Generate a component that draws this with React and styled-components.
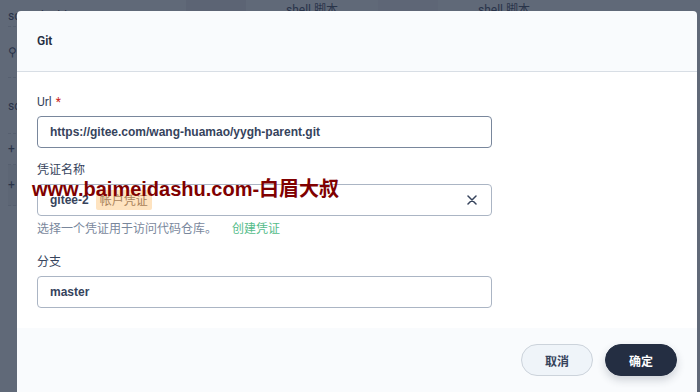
import React from 'react'
import styled, { createGlobalStyle } from 'styled-components'

const GlobalStyle = createGlobalStyle`
  body {
    margin: 0;
    overflow: hidden;
    font-family: Roboto, 'Liberation Sans', 'Noto Sans CJK SC', sans-serif;
  }
`

const Page = styled.div`
  position: relative;
  width: 700px;
  height: 392px;
  overflow: hidden;
  background: #eff4f9;
  display: flex;
`

const SideList = styled.div`
  width: 150px;
  padding: 6px 8px;
  font-size: 12px;
  color: #36435c;
  display: flex;
  flex-direction: column;
`

const SideRow = styled.div`
  height: ${({ h }) => h || 32}px;
  display: flex;
  align-items: center;
  gap: 6px;
  border-bottom: 1px dashed #ccd3db;
  background: ${({ dark }) => (dark ? '#e3e9ef' : 'transparent')};
`

const TopStrip = styled.div`
  flex: 1;
  display: flex;
  gap: 40px;
  padding: 0 20px;
  font-size: 12px;
  color: #36435c;
  height: 24px;
`

const Block = styled.div`
  width: ${({ w }) => w}px;
  height: 24px;
  background: ${({ bg }) => bg};
`

const Backdrop = styled.div`
  position: absolute;
  inset: 0;
  background: rgba(35, 45, 65, 0.7);
`

const Modal = styled.div`
  position: absolute;
  left: 17px;
  top: 11px;
  width: 680px;
  height: 400px;
  background: #f9fbfd;
  border-radius: 4px;
  display: flex;
  flex-direction: column;
  overflow: hidden;
`

const Header = styled.div`
  height: 60px;
  flex-shrink: 0;
  display: flex;
  align-items: center;
  padding: 0 20px;
  border-bottom: 1px solid #d8dee5;
  font-size: 12px;
  font-weight: 600;
  color: #242e42;
`

const Body = styled.div`
  position: relative;
  background: #fff;
  padding: 20px 205px 20px 20px;
  display: flex;
  flex-direction: column;
`

const Field = styled.div`
  display: flex;
  flex-direction: column;
  margin-bottom: ${({ mb }) => mb || 0}px;
`

const Label = styled.div`
  font-size: 12px;
  line-height: 20px;
  color: #36435c;
  margin-bottom: 4px;
  font-family: Roboto, 'Noto Sans CJK SC', sans-serif;

  span {
    color: #ca2621;
    margin-left: 4px;
  }
`

const Input = styled.div`
  height: 32px;
  box-sizing: border-box;
  border: 1px solid ${({ focus }) => (focus ? '#79879c' : '#abb5c4')};
  border-radius: 4px;
  padding: 0 12px;
  display: flex;
  align-items: center;
  gap: 7px;
  font-size: 12px;
  font-weight: 600;
  color: #36435c;
  font-family: 'Liberation Sans', 'Noto Sans CJK SC', sans-serif;
`

const Tag = styled.span`
  height: 20px;
  line-height: 20px;
  padding: 0 4px;
  border-radius: 2px;
  background: #fee3c0;
  color: #a9825a;
  font-weight: 400;
  font-family: 'Noto Sans CJK SC', sans-serif;
`

const Clear = styled.span`
  margin-left: auto;
  display: flex;
  margin-right: 2px;
`

const Hint = styled.div`
  margin-top: 2px;
  font-size: 12px;
  line-height: 20px;
  color: #79879c;
  font-family: 'Noto Sans CJK SC', sans-serif;

  a {
    color: #55bc8a;
    margin-left: 15px;
    text-decoration: none;
  }
`

const Watermark = styled.div`
  position: absolute;
  left: 15px;
  top: 101px;
  font-family: 'Liberation Sans', 'Noto Sans CJK SC', sans-serif;
  font-weight: 700;
  font-size: 20px;
  color: #800000;
  white-space: nowrap;
  pointer-events: none;
`

const Footer = styled.div`
  flex: 1;
  display: flex;
  justify-content: flex-end;
  align-items: flex-start;
  gap: 12px;
  padding: 16px 20px;
`

const Button = styled.button`
  width: 72px;
  height: 32px;
  border-radius: 16px;
  font-size: 12px;
  font-weight: 600;
  font-family: 'Noto Sans CJK SC', sans-serif;
  cursor: pointer;
  border: 1px solid ${({ primary }) => (primary ? '#242e42' : '#ccd3db')};
  background: ${({ primary }) => (primary ? '#242e42' : '#eff4f9')};
  color: ${({ primary }) => (primary ? '#fff' : '#36435c')};
  box-shadow: ${({ primary }) => (primary ? '0 4px 8px rgba(36,46,66,0.2)' : 'none')};
`

const App = () => {
  return (
    <Page>
      <GlobalStyle />
      <SideList>
        <SideRow h={20}>script build --tag</SideRow>
        <SideRow h={50}>⚲</SideRow>
        <SideRow h={55}>sc</SideRow>
        <SideRow h={30}>+</SideRow>
        <SideRow h={40} dark>+</SideRow>
      </SideList>
      <TopStrip>
        <Block w={60} bg="#dfe5ec" />
        <span>shell 脚本</span>
        <Block w={60} bg="#e6ebf0" />
        <span>shell 脚本</span>
      </TopStrip>
      <Backdrop />
      <Modal>
        <Header>Git</Header>
        <Body>
          <Field mb={12}>
            <Label>
              Url<span>*</span>
            </Label>
            <Input focus>https://gitee.com/wang-huamao/yygh-parent.git</Input>
          </Field>
          <Field mb={14}>
            <Label>凭证名称</Label>
            <Input>
              gitee-2
              <Tag>帐户凭证</Tag>
              <Clear>
                <svg width="10" height="10" viewBox="0 0 10 10">
                  <path d="M1 1L9 9M9 1L1 9" stroke="#36435c" strokeWidth="1.5" strokeLinecap="round" />
                </svg>
              </Clear>
            </Input>
            <Hint>
              选择一个凭证用于访问代码仓库。<a href="#">创建凭证</a>
            </Hint>
          </Field>
          <Field>
            <Label>分支</Label>
            <Input>master</Input>
          </Field>
          <Watermark>www.baimeidashu.com-白眉大叔</Watermark>
        </Body>
        <Footer>
          <Button>取消</Button>
          <Button primary>确定</Button>
        </Footer>
      </Modal>
    </Page>
  )
}

export default App
